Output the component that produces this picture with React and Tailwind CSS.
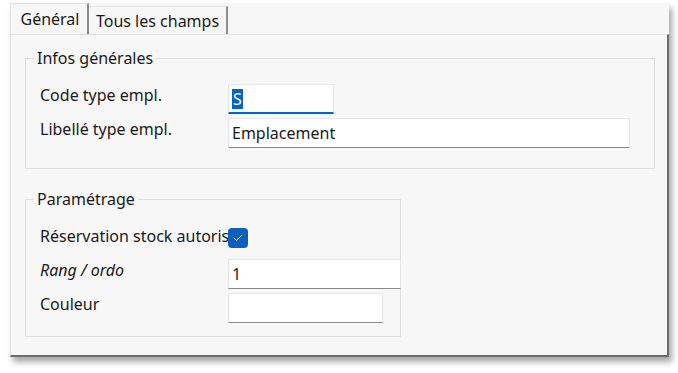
import { Check } from 'lucide-react';

const font = { fontFamily: '"Noto Sans", "Open Sans", sans-serif' };

const TextBox = ({ value, width, focused = false, children }) => (
  <div
    className={`flex h-[30px] shrink-0 items-center border border-[#e6e6e6] bg-white px-[3px] text-[16px] text-[#1a1a1a] ${
      focused ? 'border-b-2 border-b-[#0a63c2]' : 'border-b-[#8a8a8a]'
    }`}
    style={{ width }}
  >
    {children ?? value}
  </div>
);

const Row = ({ label, italic = false, children, className = '' }) => (
  <div className={`flex h-[30px] items-center ${className}`}>
    <div
      className={`mb-[9px] w-[188px] shrink-0 overflow-hidden whitespace-nowrap text-[16px] leading-[20px] text-[#1a1a1a] ${
        italic ? 'italic' : ''
      }`}
    >
      {label}
    </div>
    {children}
  </div>
);

const GroupBox = ({ title, className = '', children }) => (
  <fieldset className={`min-w-0 border border-[#dedede] ${className}`}>
    <legend className="ml-[8px] px-[3px] text-[16px] leading-[20px] text-[#1a1a1a]">{title}</legend>
    {children}
  </fieldset>
);

export default function App() {
  return (
    <div className="h-[373px] w-[678px] bg-white pl-[10px] pt-[3px]" style={font}>
      <div className="flex h-[354px] w-[659px] flex-col bg-[#f7f7f7] shadow-[3px_5px_6px_rgba(0,0,0,0.35)]">
        {/* tab strip */}
        <div className="flex h-[31px] shrink-0 items-stretch">
          <div className="flex w-[79px] items-center justify-center border-l border-t border-[#e2e2e2] border-r-2 border-r-[#8c8c8c] pl-[2px] text-[16px] text-[#1a1a1a]">
            Général
          </div>
          <div className="mt-[3px] flex w-[139px] items-center justify-center border-r-2 border-r-[#8c8c8c] border-t border-t-[#e2e2e2] text-[16px] text-[#1a1a1a]">
            Tous les champs
          </div>
          <div className="flex-1" />
        </div>

        {/* panel */}
        <div className="flex-1 border-l border-t border-[#e2e2e2] border-b-2 border-r-2 border-b-[#6c6c6c] border-r-[#6c6c6c] pl-[14px] pr-[12px] pt-[13px]">
          <GroupBox title="Infos générales">
            <div className="px-[14px] pb-[20px] pt-[16px]">
              <Row label="Code type empl.">
                <TextBox width={106} focused>
                  <span className="bg-[#0a63c2] px-[1px] leading-[20px] text-white">S</span>
                </TextBox>
              </Row>
              <Row label="Libellé type empl." className="mt-[4px]">
                <TextBox width={402} value="Emplacement" />
              </Row>
            </div>
          </GroupBox>

          <GroupBox title="Paramétrage" className="mt-[20px] w-[376px]">
            <div className="px-[14px] pb-[13px] pt-[19px]">
              <div className="flex h-[20px] items-center">
                <div className="mb-[4px] w-[188px] shrink-0 overflow-hidden whitespace-nowrap text-[16px] leading-[20px] text-[#1a1a1a]">
                  Réservation stock autorisée
                </div>
                <div className="flex h-[20px] w-[20px] shrink-0 items-center justify-center rounded-[4px] bg-[#0a5fbf]">
                  <Check size={12} strokeWidth={1.6} className="text-white" />
                </div>
              </div>
              <Row label="Rang / ordo" italic className="mt-[11px]">
                <TextBox width={173} value="1" />
              </Row>
              <Row label="Couleur" className="mt-[4px]">
                <TextBox width={155} value="" />
              </Row>
            </div>
          </GroupBox>
        </div>
      </div>
    </div>
  );
}
